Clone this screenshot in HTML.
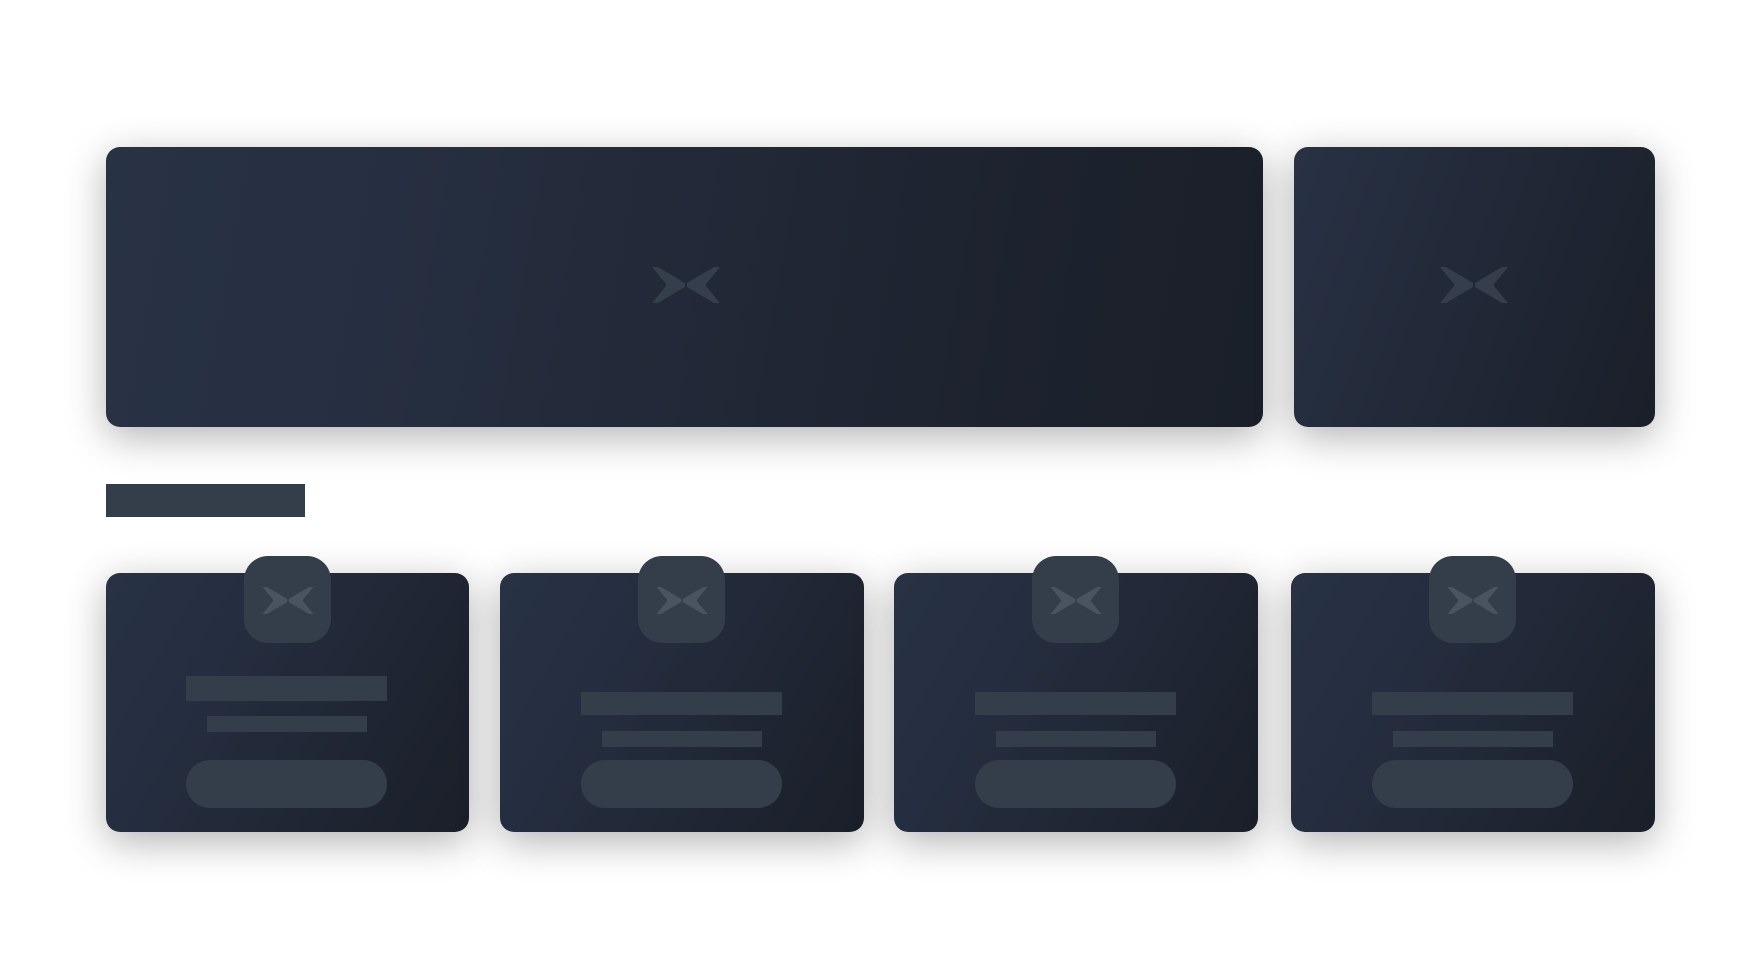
<!DOCTYPE html>
<html><head><meta charset="utf-8"><style>
html,body{margin:0;padding:0;background:#fff;width:1760px;height:956px;overflow:hidden;font-family:"Liberation Sans",sans-serif}
.card{position:absolute;border-radius:14px;background:linear-gradient(100deg,#283245 0%,#262f41 25%,#1e2430 70%,#1a1f29 100%);box-shadow:0 10px 40px rgba(0,0,0,0.3)}
.sm{background:linear-gradient(120deg,#283245 0%,#252e40 30%,#1e2430 75%,#1a1f29 100%)}
.bar{position:absolute;background:#343e4a}
.ib{position:absolute;width:87px;height:87px;border-radius:24px;background:#343e4a;top:-17px}
.btn{position:absolute;background:#343e4a;border-radius:24px}
svg{position:absolute}
</style></head><body>
<svg width="0" height="0"><defs><symbol id="lg" viewBox="0 0 68 36"><path d="M0,0 L6,0 L33,16 L33,20 L6,36 L0,36 L14,19 L14,17 Z M68,0 L62,0 L35,16 L35,20 L62,36 L68,36 L54,19 L54,17 Z"/></symbol></defs></svg>

<div class="card" style="left:106px;top:147px;width:1157px;height:280px">
<svg style="left:546px;top:120px" width="68" height="36" fill="#353e4b"><use href="#lg"/></svg></div>
<div class="card" style="left:1294px;top:147px;width:361px;height:280px;background:linear-gradient(110deg,#283245,#1a1f29)">
<svg style="left:146px;top:120px" width="68" height="36" fill="#353e4b"><use href="#lg"/></svg></div>

<div class="bar" style="left:106px;top:484px;width:199px;height:33px"></div>

<div class="card sm" style="left:106px;top:573px;width:363px;height:259px">
<div class="ib" style="left:138px"><svg style="left:18px;top:31px" width="52" height="27" fill="#4a5360"><use href="#lg"/></svg></div>
<div class="bar" style="left:80px;top:103px;width:201px;height:25px"></div>
<div class="bar" style="left:101px;top:143px;width:160px;height:16px"></div>
<div class="btn" style="left:80px;top:187px;width:201px;height:48px"></div></div>

<div class="card sm" style="left:500px;top:573px;width:364px;height:259px">
<div class="ib" style="left:138px"><svg style="left:18px;top:31px" width="52" height="27" fill="#4a5360"><use href="#lg"/></svg></div>
<div class="bar" style="left:81px;top:119px;width:201px;height:23px"></div>
<div class="bar" style="left:102px;top:158px;width:160px;height:16px"></div>
<div class="btn" style="left:81px;top:187px;width:201px;height:48px"></div></div>

<div class="card sm" style="left:894px;top:573px;width:364px;height:259px">
<div class="ib" style="left:138px"><svg style="left:18px;top:31px" width="52" height="27" fill="#4a5360"><use href="#lg"/></svg></div>
<div class="bar" style="left:81px;top:119px;width:201px;height:23px"></div>
<div class="bar" style="left:102px;top:158px;width:160px;height:16px"></div>
<div class="btn" style="left:81px;top:187px;width:201px;height:48px"></div></div>

<div class="card sm" style="left:1291px;top:573px;width:364px;height:259px">
<div class="ib" style="left:138px"><svg style="left:18px;top:31px" width="52" height="27" fill="#4a5360"><use href="#lg"/></svg></div>
<div class="bar" style="left:81px;top:119px;width:201px;height:23px"></div>
<div class="bar" style="left:102px;top:158px;width:160px;height:16px"></div>
<div class="btn" style="left:81px;top:187px;width:201px;height:48px"></div></div>
</body></html>
